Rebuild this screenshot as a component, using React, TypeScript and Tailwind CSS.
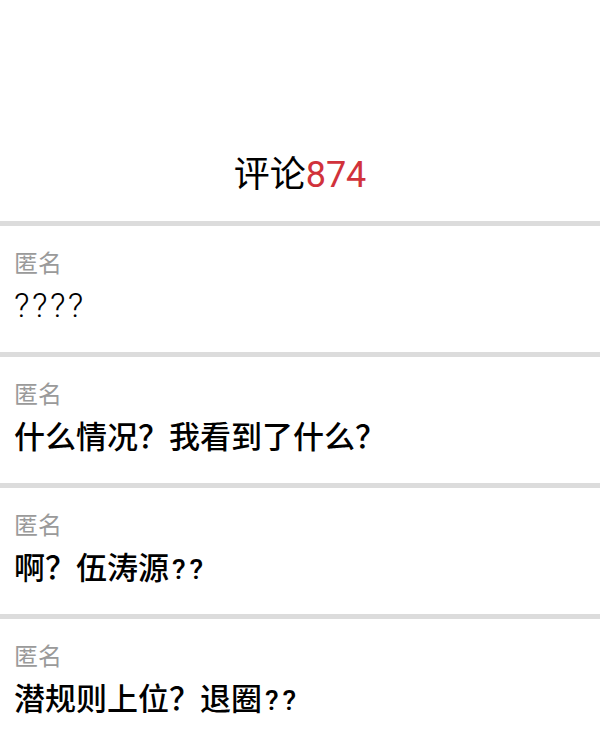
type Part = { text: string; latin?: boolean };

const comments: { id: number; parts: Part[]; light?: boolean }[] = [
  { id: 1, parts: [{ text: "????", latin: true }], light: true },
  { id: 2, parts: [{ text: "什么情况？我看到了什么？" }] },
  { id: 3, parts: [{ text: "啊？伍涛源" }, { text: "??", latin: true }] },
  { id: 4, parts: [{ text: "潜规则上位？退圈" }, { text: "??", latin: true }] },
];

function CommentText({ parts, light }: { parts: Part[]; light?: boolean }) {
  return (
    <p className="mt-[14px] text-[31px] leading-[31px] font-medium text-black">
      {parts.map((p, i) =>
        p.latin ? (
          light ? (
            <span
              key={i}
              className="text-[34px] font-light tracking-[2.5px]"
              style={{ fontFamily: "Roboto, sans-serif" }}
            >
              {p.text}
            </span>
          ) : (
            <span
              key={i}
              className="ml-[3px] text-[28px] font-medium tracking-[4px]"
              style={{ fontFamily: "Roboto, sans-serif" }}
            >
              {p.text}
            </span>
          )
        ) : (
          <span key={i}>{p.text}</span>
        )
      )}
    </p>
  );
}

export default function App() {
  return (
    <div
      className="min-h-[749px] w-[600px] overflow-hidden bg-white"
      style={{ fontFamily: '"Noto Sans CJK SC", "Noto Sans", sans-serif' }}
    >
      <header className="flex h-[221px] items-end justify-center pb-[25px]">
        <h1 className="text-[36px] leading-[42px] text-black">
          评论
          <span className="text-[#d1323b]" style={{ fontFamily: "Roboto, sans-serif" }}>
            874
          </span>
        </h1>
      </header>

      <ul>
        {comments.map((c) => (
          <li
            key={c.id}
            className="h-[131px] border-t-[5px] border-[#dcdcdc] px-[14px] pt-[24px]"
          >
            <div className="text-[24px] leading-[24px] text-[#9a9a9a]">匿名</div>
            <CommentText parts={c.parts} light={c.light} />
          </li>
        ))}
      </ul>
    </div>
  );
}
